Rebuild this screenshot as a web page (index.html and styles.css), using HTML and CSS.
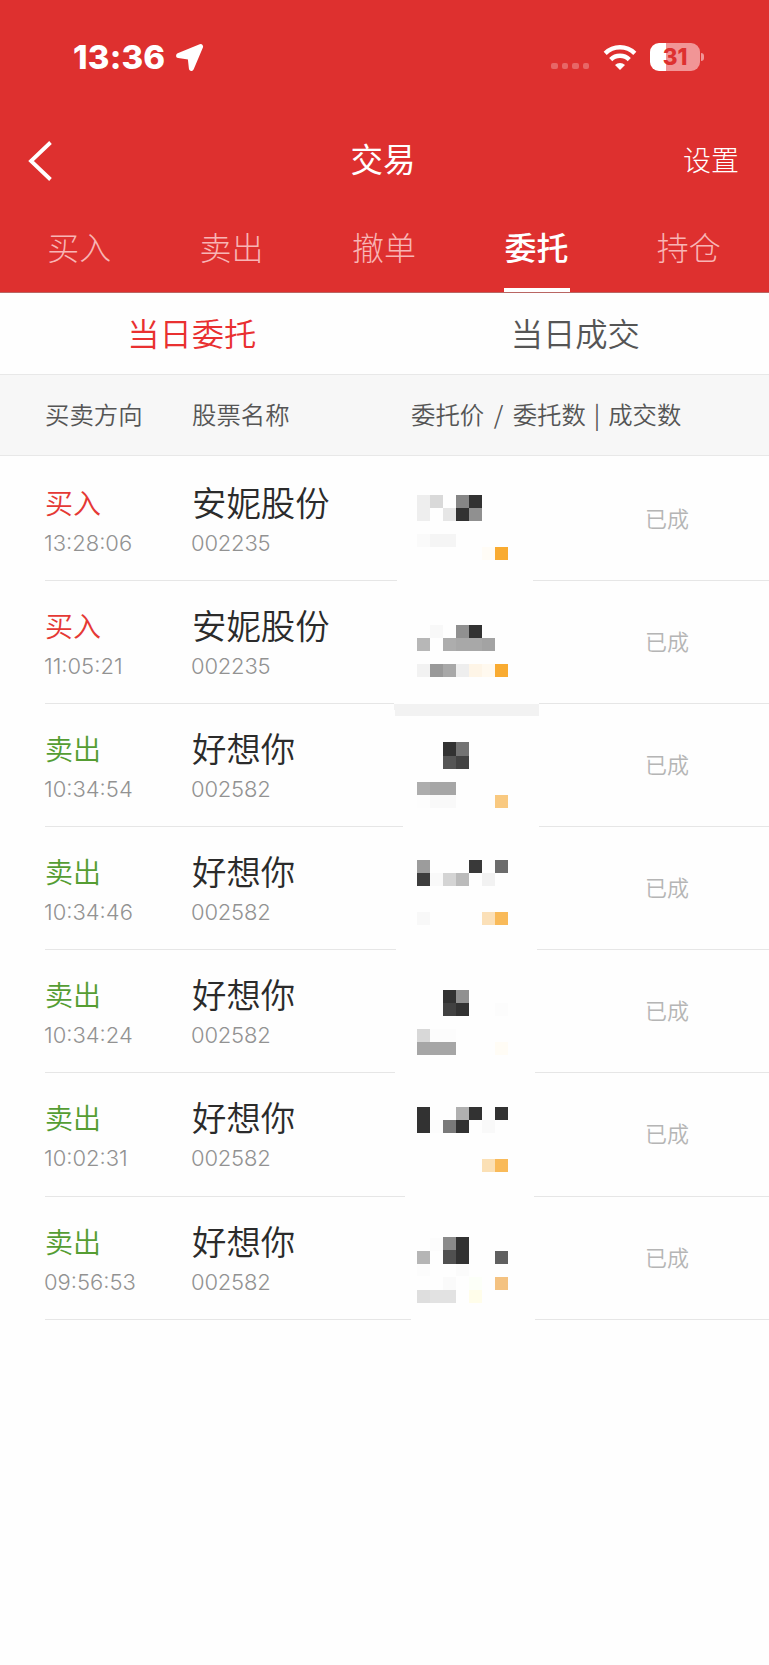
FILE: index.html
```
<!DOCTYPE html>
<html lang="zh-CN">
<head>
    <meta charset="UTF-8">
    <meta name="viewport" content="width=device-width, initial-scale=1.0">
    <title>交易</title>
    <link rel="stylesheet" href="styles.css">
</head>
<body>
    <header class="header">
        <div class="status-bar">
            <span class="clock">13:36</span>
            <svg class="location" width="30" height="30" viewBox="0 0 30 30">
                <path d="M3.6 12.6 L25.6 3.6 L16.4 25.4 L15.2 14.4 Z" fill="#fff" stroke="#fff" stroke-width="5" stroke-linejoin="round"/>
            </svg>
            <div class="signal"><i></i><i></i><i></i><i></i></div>
            <svg class="wifi" width="34" height="25" viewBox="0 0 34 25">
                <g fill="none" stroke="#fff" stroke-width="4.4">
                    <path d="M2.2 8.4 A21 21 0 0 1 31.8 8.4"/>
                    <path d="M7.7 14.6 A13.2 13.2 0 0 1 26.3 14.6"/>
                </g>
                <path d="M17 25 L12 20 A7.2 7.2 0 0 1 22 20 Z" fill="#fff"/>
            </svg>
            <div class="battery">31</div>
        </div>
        <div class="nav-bar">
            <svg class="back" width="26" height="42" viewBox="0 0 26 42">
                <path d="M23.5 2.5 L4 21 L23.5 39.5" fill="none" stroke="#fff" stroke-width="3.8"/>
            </svg>
            <h1>交易</h1>
            <span class="settings">设置</span>
        </div>
        <nav class="tabs">
            <a>买入</a>
            <a>卖出</a>
            <a>撤单</a>
            <a class="active">委托</a>
            <a>持仓</a>
        </nav>
    </header>

    <div class="sub-tabs">
        <a class="active">当日委托</a>
        <a>当日成交</a>
    </div>

    <div class="table-head">
        <span>买卖方向</span>
        <span>股票名称</span>
        <span>委托价 <i class="slash">/</i> 委托数 | 成交数</span>
    </div>

    <main class="orders">
        <div class="order">
            <div><p class="side buy">买入</p><p class="sub time">13:28:06</p></div>
            <div><p class="name">安妮股份</p><p class="sub">002235</p></div>
            <span class="status">已成</span>
        </div>
        <div class="order">
            <div><p class="side buy">买入</p><p class="sub time">11:05:21</p></div>
            <div><p class="name">安妮股份</p><p class="sub">002235</p></div>
            <span class="status">已成</span>
        </div>
        <div class="order">
            <div><p class="side sell">卖出</p><p class="sub time">10:34:54</p></div>
            <div><p class="name">好想你</p><p class="sub">002582</p></div>
            <span class="status">已成</span>
        </div>
        <div class="order">
            <div><p class="side sell">卖出</p><p class="sub time">10:34:46</p></div>
            <div><p class="name">好想你</p><p class="sub">002582</p></div>
            <span class="status">已成</span>
        </div>
        <div class="order">
            <div><p class="side sell">卖出</p><p class="sub time">10:34:24</p></div>
            <div><p class="name">好想你</p><p class="sub">002582</p></div>
            <span class="status">已成</span>
        </div>
        <div class="order">
            <div><p class="side sell">卖出</p><p class="sub time">10:02:31</p></div>
            <div><p class="name">好想你</p><p class="sub">002582</p></div>
            <span class="status">已成</span>
        </div>
        <div class="order">
            <div><p class="side sell">卖出</p><p class="sub time">09:56:53</p></div>
            <div><p class="name">好想你</p><p class="sub">002582</p></div>
            <span class="status">已成</span>
        </div>

        <!-- mosaic over the price column, 13px blocks -->
        <svg class="mosaic" width="160" height="880" viewBox="390 455 160 880" shape-rendering="crispEdges">
            <g fill="#fefefe">
                <rect x="397" y="570" width="136" height="20"/>
                <rect x="394" y="695" width="145" height="20"/>
                <rect x="403" y="816" width="136" height="20"/>
                <rect x="396" y="940" width="141" height="20"/>
                <rect x="395" y="1062" width="140" height="20"/>
                <rect x="405" y="1186" width="129" height="20"/>
                <rect x="411" y="1309" width="124" height="20"/>
            </g>
            <path d="M394 704 H539 V716 H395 Z" fill="#f2f2f2"/>

            <rect x="417" y="495" width="13" height="26" fill="#eee"/>
            <rect x="430" y="495" width="13" height="13" fill="#d9d9d9"/>
            <rect x="456" y="495" width="13" height="13" fill="#868686"/>
            <rect x="469" y="495" width="13" height="13" fill="#323232"/>
            <rect x="443" y="508" width="13" height="13" fill="#e6e6e6"/>
            <rect x="456" y="508" width="13" height="13" fill="#323232"/>
            <rect x="469" y="508" width="13" height="13" fill="#909090"/>
            <rect x="417" y="534" width="13" height="13" fill="#fafafa"/>
            <rect x="430" y="534" width="26" height="13" fill="#f5f5f5"/>
            <rect x="482" y="547" width="13" height="13" fill="#fffcf6"/>
            <rect x="495" y="547" width="13" height="13" fill="#f9ab31"/>

            <rect x="430" y="625" width="13" height="13" fill="#f8f8f8"/>
            <rect x="456" y="625" width="13" height="13" fill="#909090"/>
            <rect x="469" y="625" width="13" height="13" fill="#323232"/>
            <rect x="417" y="638" width="13" height="13" fill="#b7b7b7"/>
            <rect x="443" y="638" width="13" height="13" fill="#adadad"/>
            <rect x="456" y="638" width="26" height="13" fill="#a8a8a8"/>
            <rect x="482" y="638" width="13" height="13" fill="#a3a3a3"/>
            <rect x="417" y="664" width="13" height="13" fill="#f2f2f2"/>
            <rect x="430" y="664" width="13" height="13" fill="#999"/>
            <rect x="443" y="664" width="13" height="13" fill="#a8a8a8"/>
            <rect x="456" y="664" width="13" height="13" fill="#eee"/>
            <rect x="469" y="664" width="13" height="13" fill="#fef5e7"/>
            <rect x="482" y="664" width="13" height="13" fill="#fff9ef"/>
            <rect x="495" y="664" width="13" height="13" fill="#f9ab31"/>

            <rect x="443" y="742" width="13" height="14" fill="#323232"/>
            <rect x="456" y="742" width="13" height="14" fill="#737373"/>
            <rect x="443" y="756" width="13" height="13" fill="#555"/>
            <rect x="456" y="756" width="13" height="13" fill="#434343"/>
            <rect x="417" y="782" width="13" height="13" fill="#adadad"/>
            <rect x="430" y="782" width="26" height="13" fill="#a6a6a6"/>
            <rect x="417" y="795" width="13" height="13" fill="#fdfdfd"/>
            <rect x="430" y="795" width="26" height="13" fill="#f9f9f9"/>
            <rect x="495" y="795" width="13" height="13" fill="#f9c980"/>

            <rect x="417" y="860" width="13" height="13" fill="#9c9c9c"/>
            <rect x="469" y="860" width="13" height="13" fill="#393939"/>
            <rect x="495" y="860" width="13" height="13" fill="#6c6c6c"/>
            <rect x="417" y="873" width="13" height="13" fill="#3d3d3d"/>
            <rect x="430" y="873" width="13" height="13" fill="#f9f9f9"/>
            <rect x="443" y="873" width="13" height="13" fill="#d4d4d4"/>
            <rect x="456" y="873" width="13" height="13" fill="#bbb"/>
            <rect x="482" y="873" width="13" height="13" fill="#f2f2f2"/>
            <rect x="417" y="912" width="13" height="13" fill="#f8f8f8"/>
            <rect x="482" y="912" width="13" height="13" fill="#fbe0b8"/>
            <rect x="495" y="912" width="13" height="13" fill="#f9ba59"/>

            <rect x="443" y="990" width="13" height="13" fill="#323232"/>
            <rect x="456" y="990" width="13" height="13" fill="#909090"/>
            <rect x="443" y="1003" width="13" height="13" fill="#414141"/>
            <rect x="456" y="1003" width="13" height="13" fill="#323232"/>
            <rect x="495" y="1003" width="13" height="13" fill="#fcfcfc"/>
            <rect x="417" y="1029" width="13" height="13" fill="#d8d8d8"/>
            <rect x="430" y="1029" width="26" height="13" fill="#fcfcfc"/>
            <rect x="417" y="1042" width="39" height="13" fill="#a6a6a6"/>
            <rect x="495" y="1042" width="13" height="13" fill="#fffcf5"/>

            <rect x="417" y="1107" width="13" height="26" fill="#323232"/>
            <rect x="456" y="1107" width="13" height="13" fill="#b0b0b0"/>
            <rect x="469" y="1107" width="13" height="13" fill="#323232"/>
            <rect x="495" y="1107" width="13" height="13" fill="#323232"/>
            <rect x="430" y="1120" width="13" height="13" fill="#fcfcfc"/>
            <rect x="443" y="1120" width="13" height="13" fill="#797979"/>
            <rect x="456" y="1120" width="13" height="13" fill="#323232"/>
            <rect x="482" y="1120" width="13" height="13" fill="#f9f9f9"/>
            <rect x="482" y="1159" width="13" height="13" fill="#fbe0b5"/>
            <rect x="495" y="1159" width="13" height="13" fill="#f9ba59"/>

            <rect x="430" y="1238" width="13" height="13" fill="#fcfcfc"/>
            <rect x="443" y="1237" width="13" height="13" fill="#8a8a8a"/>
            <rect x="456" y="1237" width="13" height="27" fill="#323232"/>
            <rect x="417" y="1251" width="13" height="13" fill="#b5b5b5"/>
            <rect x="443" y="1250" width="13" height="14" fill="#505050"/>
            <rect x="495" y="1251" width="13" height="13" fill="#606060"/>
            <rect x="417" y="1264" width="13" height="12" fill="#fcfcfc"/>
            <rect x="456" y="1264" width="13" height="12" fill="#fbfbfb"/>
            <rect x="443" y="1277" width="13" height="13" fill="#fafafa"/>
            <rect x="469" y="1277" width="13" height="13" fill="#fcfff8"/>
            <rect x="495" y="1277" width="13" height="13" fill="#f4c281"/>
            <rect x="417" y="1290" width="13" height="13" fill="#dedede"/>
            <rect x="430" y="1290" width="26" height="13" fill="#e2e2e2"/>
            <rect x="469" y="1290" width="13" height="13" fill="#fffdea"/>
        </svg>
    </main>
</body>
</html>
```
FILE: styles.css
```
* {
    box-sizing: border-box;
}
body {
    margin: 0;
    font-family: "Noto Sans CJK SC", sans-serif;
    font-weight: 350;
    background-color: #fefefe;
    color: #333;
}
h1, p {
    margin: 0;
    font-weight: inherit;
}
.header {
    height: 293px;
    background-color: #de302f;
    border-bottom: 1px solid #b96663;
    color: #fff;
}
.status-bar {
    display: flex;
    align-items: center;
    height: 114px;
    padding: 0 69px 0 73px;
}
.clock {
    width: 95px;
    font-family: Inter, sans-serif;
    font-size: 33px;
    font-weight: 800;
    line-height: 40px;
    letter-spacing: 0.2px;
    white-space: nowrap;
    padding-bottom: 1px;
}
.location {
    margin: 1px 0 0 7px;
}
.signal {
    display: flex;
    gap: 4px;
    margin: 18px 14px 0 auto;
}
.signal i {
    width: 6.5px;
    height: 6.5px;
    border-radius: 2px;
    background-color: #e76666;
}
.wifi {
    margin-right: 13px;
}
.battery {
    position: relative;
    width: 50px;
    height: 28px;
    border-radius: 9px;
    background: linear-gradient(to right, #fff 16px, #f19596 16px);
    color: #de302f;
    font-family: Inter, sans-serif;
    font-size: 22.5px;
    font-weight: 800;
    line-height: 28px;
    text-align: center;
}
.battery::after {
    content: "";
    position: absolute;
    left: 51px;
    top: 10px;
    width: 3px;
    height: 8px;
    border-radius: 0 4px 4px 0;
    background-color: #f19596;
}
.nav-bar {
    display: grid;
    grid-template-columns: 1fr auto 1fr;
    align-items: center;
    height: 90px;
    padding: 3px 30px 0 27px;
}
.nav-bar h1 {
    padding-bottom: 6px;
    font-size: 32.5px;
    font-weight: 400;
}
.settings {
    padding-bottom: 3px;
    font-size: 28px;
    font-weight: 300;
    justify-self: end;
}
.tabs {
    display: flex;
    height: 88px;
    padding: 0 4px 0 3px;
}
.tabs a {
    position: relative;
    flex: 1;
    text-align: center;
    font-size: 32px;
    font-weight: 300;
    line-height: 85px;
    color: #f8b5b5;
}
.tabs .active {
    color: #fff;
    font-weight: 500;
}
.tabs .active::after {
    content: "";
    position: absolute;
    left: 50%;
    bottom: 0;
    width: 66px;
    height: 4px;
    margin-left: -32px;
    background-color: #fff;
}
.sub-tabs {
    display: flex;
    height: 81px;
    padding-right: 2px;
}
.sub-tabs a {
    flex: 1;
    text-align: center;
    font-size: 32.3px;
    line-height: 78px;
    color: #555;
}
.sub-tabs .active {
    color: #e93030;
}
.table-head {
    display: grid;
    grid-template-columns: 147px 219px 1fr;
    align-items: center;
    height: 82px;
    padding: 0 0 4px 45px;
    background-color: #f7f7f7;
    border-top: 1px solid #e8e8e8;
    border-bottom: 1px solid #e8e8e8;
    font-size: 24.4px;
    word-spacing: 2.5px;
    color: #555;
}
.slash {
    margin: 0 1.5px;
    font-style: normal;
}
.orders {
    position: relative;
    padding: 2px 0 0 45px;
}
.order {
    display: grid;
    grid-template-columns: 147px 1fr 124px;
    height: 123.1px;
    padding-top: 21px;
    border-bottom: 1px solid #e6e6e6;
}
.side {
    height: 48px;
    line-height: 46px;
    font-size: 28px;
}
.buy {
    color: #e53935;
}
.sell {
    color: #559d33;
}
.name {
    height: 48px;
    line-height: 44px;
    font-size: 34.4px;
    color: #2b2b2b;
}
.sub {
    margin-left: -1px;
    font-family: Inter, sans-serif;
    font-size: 22px;
    line-height: 32px;
    letter-spacing: -0.2px;
    color: #929292;
}
.time {
    letter-spacing: 0;
}
.status {
    font-size: 22px;
    line-height: 76px;
    color: #b5b5b5;
}
.mosaic {
    position: absolute;
    left: 390px;
    top: -1px;
}
```
